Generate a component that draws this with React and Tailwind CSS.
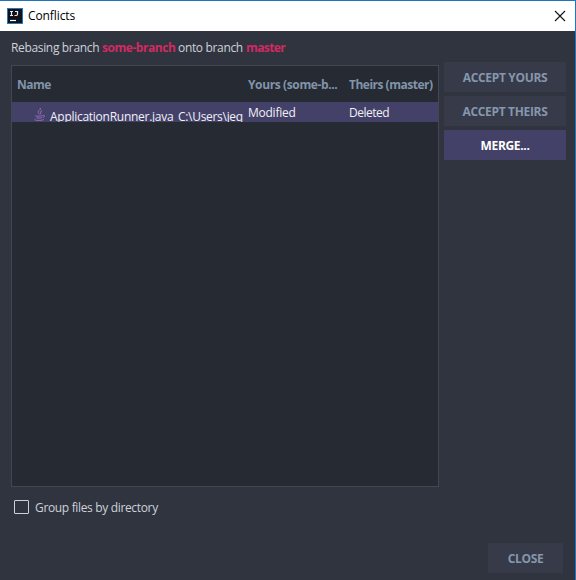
import React from "react";

function IdeaLogo() {
  return (
    <svg className="ml-[7px] size-4 shrink-0" viewBox="0 0 16 16">
      <rect width="16" height="16" fill="#2477bd" />
      <rect x="1" y="1" width="14" height="14" fill="#10121a" />
      <path d="M3 3.500h3M4.500 3.500v4M3 7.500h3M8 3.500h3M10.500 3v3.300q0 1.200-1.200 1.200H7.500" stroke="#e8e8ea" strokeWidth="1.200" fill="none" />
      <path d="M3 12.500h6" stroke="#fff" strokeWidth="1.200" />
    </svg>
  );
}

function JavaIcon() {
  return (
    <svg className="mt-[5px] h-4 w-4 shrink-0" viewBox="0 0 16 16" fill="none" stroke="#9a6fb4" strokeWidth="1">
      <path d="M8.300 1c1 2-2.600 2.600-2.200 4.300.2.900 1.100 1.300 1.400 2.100M10 3.400C7.900 4.500 9.300 5.600 8.400 7.300" />
      <path d="M3.400 8.500c-1 .9 6 .9 7.500.1M4.400 10.700c1 .6 4.300.6 5.500 0M11.200 8.300c2-.3 1.700 1.700-.4 2.300M2.400 12.700c1.500 1 8.500 1 9.500-.4" />
    </svg>
  );
}

function Button({ children, className = "bg-[#373a49] text-[#8597ad]" }) {
  return (
    <button className={"flex h-[30px] w-full items-center justify-center pt-[2px] text-[12px] font-bold tracking-[-0.33px] whitespace-nowrap " + className}>
      {children}
    </button>
  );
}

export default function App() {
  return (
    <div className="flex h-[580px] w-[576px] flex-col overflow-hidden border-t border-r border-[#1f76bd] bg-[#30343f] font-['Open_Sans','Noto_Sans',sans-serif] text-[12px] leading-4 tracking-[-0.34px] text-[#cdd2da]">
      <header className="flex h-[30px] shrink-0 items-center bg-white text-black">
        <IdeaLogo />
        <span className="ml-[5px] tracking-[-0.1px]">Conflicts</span>
        <svg className="mr-[9px] ml-auto size-3" viewBox="0 0 12 12" stroke="#111" strokeWidth="1.1">
          <path d="M1 1l10 10M11 1L1 11" />
        </svg>
      </header>
      <p className="mt-[9px] flex h-4 shrink-0 pl-[11px] whitespace-nowrap">
        <span className="w-[91px]">Rebasing branch</span>
        <b className="w-[76px] tracking-[-0.46px] text-[#d02a62]">some-branch</b>
        <span className="w-[68px]">onto branch</span>
        <b className="tracking-[-0.6px] text-[#d02a62]">master</b>
      </p>
      <main className="mt-[6px] flex h-[425px] shrink-0 pl-[11px]">
        <section className="mt-[3px] h-[422px] w-[428px] border border-[#434753] bg-[#262a33]">
          <div className="flex h-9 items-center pt-[2px] pl-[5px] font-bold tracking-[-0.5px] whitespace-nowrap text-[#8294aa]">
            <span className="w-[231px]">Name</span>
            <span className="w-[101px] tracking-[-0.38px]">Yours (some-b...</span>
            <span>Theirs (master)</span>
          </div>
          <div className="flex h-5 overflow-hidden bg-[#444169] whitespace-nowrap text-[#f0f0f6]">
            <div className="flex w-[231px] overflow-hidden pl-[20px]">
              <JavaIcon />
              <span className="mt-[7px] ml-[2px] w-[128px] shrink-0 tracking-[-0.27px]">ApplicationRunner.java</span>
              <span className="mt-[7px] tracking-[-0.3px]">C:\Users\jeq</span>
            </div>
            <span className="mt-[3px] ml-[5px] w-[101px] tracking-[-0.25px]">Modified</span>
            <span className="mt-[3px] tracking-[-0.5px]">Deleted</span>
          </div>
        </section>
        <aside className="ml-[5px] flex w-[122px] flex-col gap-1">
          <Button>ACCEPT YOURS</Button>
          <Button>ACCEPT THEIRS</Button>
          <Button className="bg-[#444169] text-white">MERGE...</Button>
        </aside>
      </main>
      <label className="mt-[12px] flex h-4 shrink-0 items-center pl-[14px] whitespace-nowrap">
        <span className="h-[14px] w-[15px] rounded-[1px] border border-[#cdd2da]" />
        <span className="mt-[2px] ml-[6px]">Group files by directory</span>
      </label>
      <footer className="mt-[28px] ml-[488px] w-[75px]">
        <Button>CLOSE</Button>
      </footer>
    </div>
  );
}
